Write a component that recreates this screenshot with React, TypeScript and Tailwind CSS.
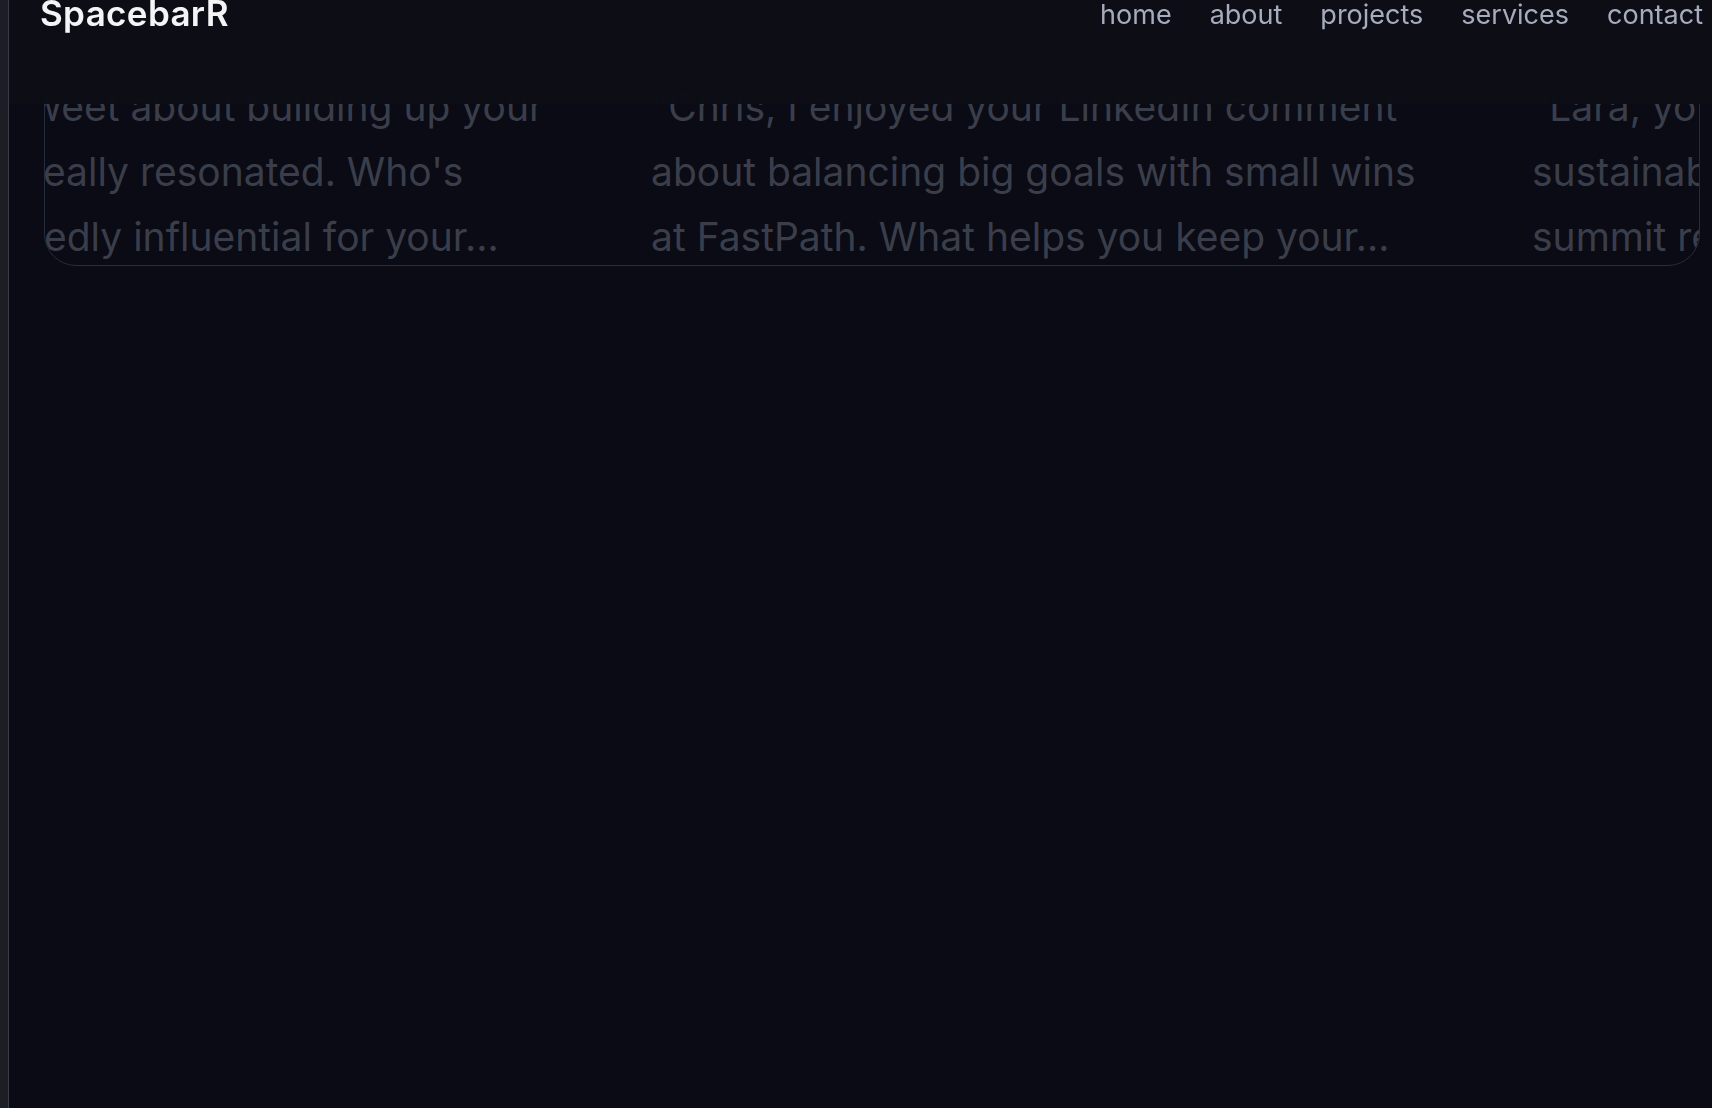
import React from "react";

const navLinks = ["home", "about", "projects", "services", "contact"];

const Header = () => {
  return (
    <header className="absolute inset-x-0 top-0 z-10 h-[104px] bg-[#0d0e15]/95 backdrop-blur-md flex items-start justify-between pl-[31px] pr-[9px]">
      <a className="-mt-[4px] text-[35px] leading-none font-semibold text-[#f4f4f6] tracking-[0.01em]">
        SpacebarR
      </a>
      <nav className="flex items-start gap-[38px] mt-[1px]">
        {navLinks.map((link) => (
          <a key={link} className="text-[27px] leading-none text-[#a6acbd]">
            {link}
          </a>
        ))}
      </nav>
    </header>
  );
};

const MessageCard = () => {
  return (
    <div className="ml-[35px] mr-[12px] rounded-[32px] border border-[#252d3b] overflow-hidden">
      <div className="flex gap-20 translate-y-[4px] text-[39px] leading-[65px] text-[#3a3e4b] whitespace-nowrap">
        {/* column scrolled off to the left */}
        <div className="w-[526px] shrink-0 flex flex-col">
          <p className="-ml-[15px]">weet about building up your</p>
          <p className="-ml-[2px]">eally resonated. Who's</p>
          <p className="-ml-[1px]">edly influential for your…</p>
        </div>
        <div className="w-[801px] shrink-0 flex flex-col">
          <p>“Chris, I enjoyed your LinkedIn comment</p>
          <p>about balancing big goals with small wins</p>
          <p>at FastPath. What helps you keep your…</p>
        </div>
        <div className="w-[801px] shrink-0 flex flex-col">
          <p>“Lara, your keynote on building</p>
          <p>sustainable teams at the growth</p>
          <p>summit really stuck with me…</p>
        </div>
      </div>
    </div>
  );
};

export default function App() {
  return (
    <div
      className="h-[1108px] w-full flex bg-[#0a0b14] overflow-hidden"
      style={{ fontFamily: "Inter, 'Noto Sans', sans-serif" }}
    >
      <aside className="w-[9px] shrink-0 bg-[#1c1e26] border-r border-[#3a3d47]" />
      <main className="relative flex-1 min-w-0 flex flex-col">
        <Header />
        <section className="pt-[69px]">
          <MessageCard />
        </section>
      </main>
    </div>
  );
}
